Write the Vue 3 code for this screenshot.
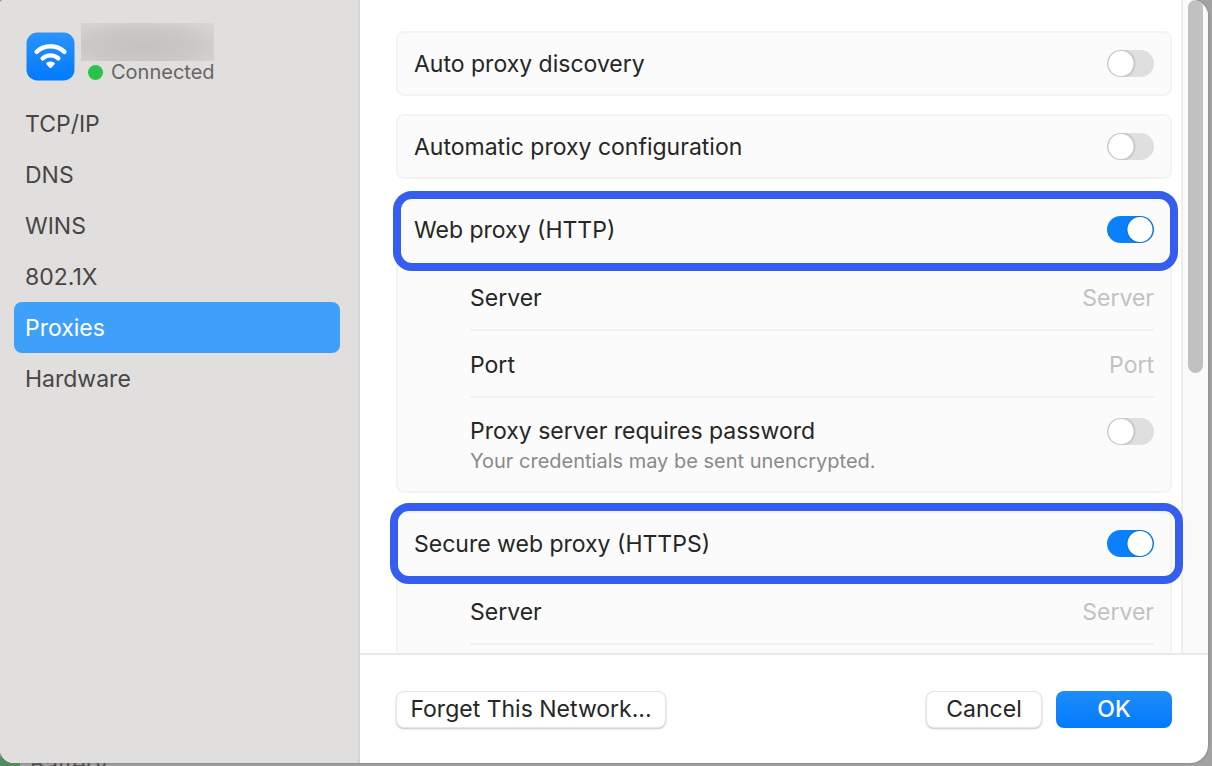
<script setup>
import { ref } from 'vue'

const tabs = ['TCP/IP', 'DNS', 'WINS', '802.1X', 'Proxies', 'Hardware']
const active = ref('Proxies')

const autoDiscovery = ref(false)
const autoConfig = ref(false)
const webProxy = ref(true)
const secureProxy = ref(true)
const needsPassword = ref(false)
</script>

<template>
  <div class="desktop">
    <div class="behind"><span class="behind-dot"></span>Battery</div>
    <div class="window">
      <aside class="sidebar">
        <header class="network">
          <svg class="wifi" viewBox="0 0 48 48" aria-label="Wi-Fi" role="img">
            <defs>
              <linearGradient id="wifi-fill" x1="0" y1="0" x2="0" y2="1">
                <stop offset="0" stop-color="#2a93fb" />
                <stop offset="1" stop-color="#027afb" />
              </linearGradient>
            </defs>
            <rect x="0.5" y="0.5" width="47" height="47" rx="10.5" fill="url(#wifi-fill)" />
            <g fill="none" stroke="#fff" stroke-width="4.4" stroke-linecap="round">
              <path d="M10.400 19.400a19.800 19.800 0 0 1 27.200 0" />
              <path d="M16.400 25.800a11.400 11.400 0 0 1 15.200 0" />
            </g>
            <path d="M24 28.800c1.700 0 3 .5 4 1.500.4.4.4.9 0 1.300l-3.100 3.300c-.6.600-1.200.600-1.800 0l-3.100-3.300c-.4-.4-.4-.9 0-1.300 1-1 2.300-1.500 4-1.500z" fill="#fff" />
          </svg>
          <div class="network-text">
            <div class="redacted"></div>
            <div class="status"><span class="dot"></span>Connected</div>
          </div>
        </header>
        <nav class="tabs">
          <button
            v-for="tab in tabs"
            :key="tab"
            type="button"
            class="tab"
            :class="{ active: tab === active }"
            @click="active = tab"
          >{{ tab }}</button>
        </nav>
      </aside>

      <main class="main">
        <div class="body">
          <div class="cards">
            <section class="card">
              <label class="row">
                <span>Auto proxy discovery</span>
                <input v-model="autoDiscovery" class="switch" type="checkbox" role="switch" />
              </label>
            </section>

            <section class="card">
              <label class="row">
                <span>Automatic proxy configuration</span>
                <input v-model="autoConfig" class="switch" type="checkbox" role="switch" />
              </label>
            </section>

            <section class="card">
              <label class="row">
                <span>Web proxy (HTTP)</span>
                <input v-model="webProxy" class="switch" type="checkbox" role="switch" />
                <span class="highlight"></span>
              </label>
              <div class="fields">
                <label class="field">
                  <span>Server</span>
                  <input class="entry" type="text" placeholder="Server" />
                </label>
                <label class="field">
                  <span>Port</span>
                  <input class="entry" type="text" placeholder="Port" />
                </label>
                <label class="field password">
                  <span class="stack">
                    <span>Proxy server requires password</span>
                    <small>Your credentials may be sent unencrypted.</small>
                  </span>
                  <input v-model="needsPassword" class="switch" type="checkbox" role="switch" />
                </label>
              </div>
            </section>

            <section class="card">
              <label class="row">
                <span>Secure web proxy (HTTPS)</span>
                <input v-model="secureProxy" class="switch" type="checkbox" role="switch" />
                <span class="highlight wide"></span>
              </label>
              <div class="fields">
                <label class="field">
                  <span>Server</span>
                  <input class="entry" type="text" placeholder="Server" />
                </label>
                <div class="field"></div>
              </div>
            </section>
          </div>
          <div class="track"><div class="thumb"></div></div>
        </div>

        <footer class="footer">
          <button type="button" class="button forget">Forget This Network...</button>
          <button type="button" class="button">Cancel</button>
          <button type="button" class="button primary">OK</button>
        </footer>
      </main>
    </div>
  </div>
</template>

<style>
body {
  margin: 0;
}
</style>

<style scoped>
* {
  box-sizing: border-box;
}

.desktop {
  position: relative;
  display: flex;
  height: 100vh;
  padding: 0 4px 3px 0;
  overflow: hidden;
  background: #a3a3a3;
  color: #262626;
  font-family: Inter, "Liberation Sans", sans-serif;
  font-size: 23px;
  line-height: 30px;
}

.behind {
  position: absolute;
  bottom: -14px;
  left: 0;
  display: flex;
  align-items: center;
  gap: 10px;
  color: #4a4a4a;
}

.behind-dot {
  width: 20px;
  height: 24px;
  border-radius: 6px;
  background: #4f8f5c;
}

.window {
  position: relative;
  display: flex;
  flex: 1;
  min-width: 0;
  overflow: hidden;
  border-radius: 4px 16px 18px 14px;
  background: #fff;
  box-shadow: 0 0 3px #777;
}

.sidebar {
  flex: 0 0 360px;
  padding: 23px 18px 0 14px;
  border-right: 2px solid #d4d3d2;
  background: #e0dfdd;
}

.network {
  display: flex;
  gap: 6px;
  padding-left: 12px;
}

.wifi {
  width: 49px;
  height: 49px;
  margin-top: 9px;
}

.redacted {
  width: 133px;
  height: 38px;
  background: radial-gradient(ellipse at 45% 60%, #c3c2c1 0%, #c9c8c7 50%, #d9d8d6 100%);
}

.status {
  display: flex;
  align-items: center;
  gap: 8px;
  padding-left: 7px;
  color: #666564;
  font-size: 20px;
  line-height: 22px;
}

.dot {
  width: 15px;
  height: 15px;
  border-radius: 50%;
  background: #29c24a;
}

.tabs {
  display: flex;
  flex-direction: column;
  margin-top: 15px;
}

.tab {
  height: 51px;
  padding: 0 11px;
  border: 0;
  border-radius: 8px;
  background: transparent;
  color: #474645;
  font: inherit;
  text-align: left;
}

.tab.active {
  background: #3fa0fa;
  color: #fff;
}

.main {
  display: flex;
  flex: 1;
  flex-direction: column;
  min-width: 0;
}

.body {
  display: flex;
  flex: 1;
  min-height: 0;
  overflow: hidden;
}

.cards {
  display: flex;
  flex: 1;
  flex-direction: column;
  gap: 18px;
  min-width: 0;
  padding: 31px 9px 0 36px;
}

.card {
  flex: none;
  border: 2px solid #f3f3f3;
  border-radius: 8px;
  background: #fbfbfb;
}

.row {
  position: relative;
  display: flex;
  align-items: center;
  justify-content: space-between;
  height: 61px;
  padding: 0 16px;
}

.highlight {
  position: absolute;
  inset: -8px -8px -11px -5px;
  border: 8px solid #355df0;
  border-radius: 19px;
  pointer-events: none;
}

.highlight.wide {
  inset: -10px -13px -10px -8px;
}

.fields {
  margin-left: 72px;
  padding: 4px 16px 0 0;
}

.field {
  display: flex;
  align-items: center;
  justify-content: space-between;
  height: 67px;
  padding-top: 2px;
  border-bottom: 2px solid #f1f1f1;
}

.field.password {
  align-items: flex-start;
  height: 93px;
  padding-top: 18px;
  border: 0;
}

.password .switch {
  margin-top: 2px;
}

.stack {
  display: flex;
  flex-direction: column;
}

.stack small {
  color: #8a8a8a;
  font-size: 20px;
}

.entry {
  width: 200px;
  padding: 0;
  border: 0;
  outline: 0;
  background: transparent;
  color: inherit;
  font: inherit;
  text-align: right;
}

.entry::placeholder {
  color: #c2c2c2;
  opacity: 1;
}

.switch {
  flex: none;
  width: 47px;
  height: 27px;
  margin: 0;
  border-radius: 14px;
  appearance: none;
  background: radial-gradient(circle at 14px 50%, #fff 12px, #c9c9c9 13px, #c9c9c9 14px, #dfdfdf 15px);
}

.switch:checked {
  background: radial-gradient(circle at 33px 50%, #fff 12px, #0a6fdc 13px, #0a7ef5 14px, #0a80fb 15px);
}

.track {
  display: flex;
  flex: none;
  justify-content: center;
  width: 27px;
  border-left: 2px solid #eee;
  background: #fafafa;
}

.thumb {
  width: 15px;
  height: 373px;
  border-radius: 8px;
  background: #c1c1c1;
}

.footer {
  display: flex;
  align-items: center;
  gap: 14px;
  height: 110px;
  padding: 0 36px;
  border-top: 2px solid #e9e9e9;
}

.button {
  width: 116px;
  height: 37px;
  padding: 0;
  border: 1px solid #e6e6e6;
  border-radius: 8px;
  background: #fff;
  box-shadow: 0 1px 2px #c4c4c4;
  color: #262626;
  font: inherit;
  line-height: 30px;
}

.forget {
  width: 270px;
  margin-right: auto;
}

.primary {
  border: 0;
  background: linear-gradient(#1f8dfb, #017afb);
  box-shadow: none;
  color: #fff;
  font-weight: 500;
}
</style>
